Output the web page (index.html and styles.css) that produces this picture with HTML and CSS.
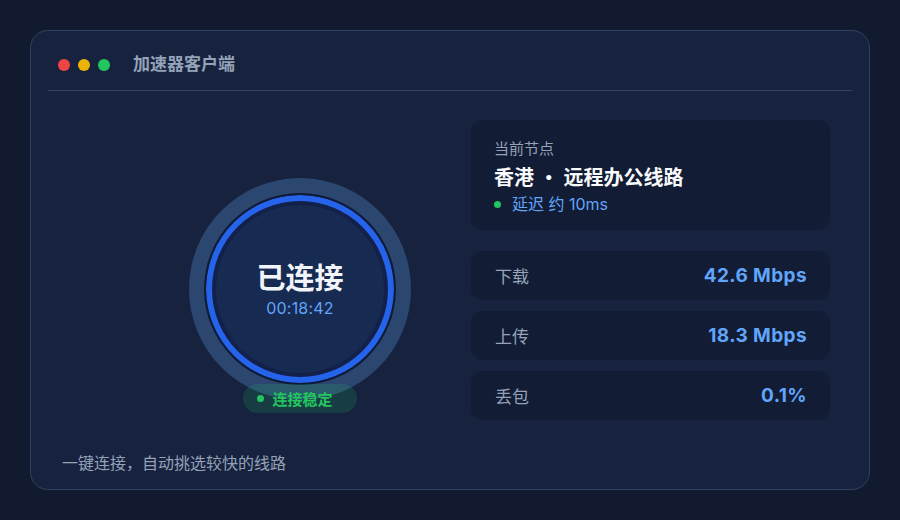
FILE: index.html
```html
<!DOCTYPE html>
<html lang="zh-CN">
<head>
<meta charset="utf-8">
<title>加速器客户端</title>
<link rel="stylesheet" href="styles.css">
</head>
<body>
  <div class="window">
    <header class="titlebar">
      <span class="dot dot-red"></span>
      <span class="dot dot-yellow"></span>
      <span class="dot dot-green"></span>
      <span class="app-title">加速器客户端</span>
    </header>

    <main class="content">
      <section class="connect">
        <div class="halo">
          <div class="ring">
            <div class="status">已连接</div>
            <div class="timer">00:18:42</div>
          </div>
        </div>
        <div class="badge"><span class="badge-dot"></span>连接稳定</div>
      </section>

      <section class="panel">
        <div class="node-card">
          <div class="node-label">当前节点</div>
          <div class="node-name">香港 <span class="sep">·</span> 远程办公线路</div>
          <div class="node-latency"><span class="latency-dot"></span>延迟 约 10ms</div>
        </div>
        <div class="stat"><span class="stat-label">下载</span><span class="stat-value">42.6 Mbps</span></div>
        <div class="stat"><span class="stat-label">上传</span><span class="stat-value">18.3 Mbps</span></div>
        <div class="stat"><span class="stat-label">丢包</span><span class="stat-value">0.1%</span></div>
      </section>
    </main>

    <footer class="hint">一键连接，自动挑选较快的线路</footer>
  </div>
</body>
</html>
```

FILE: styles.css
```css
* {
  box-sizing: border-box;
}

html, body {
  margin: 0;
  height: 100%;
}

body {
  background: #111a2e;
  padding: 30px;
  font-family: "Inter", "Noto Sans CJK SC", sans-serif;
  color: #e2e8f0;
}

.window {
  height: 460px;
  background: #17223f;
  border: 1px solid #334160;
  border-radius: 18px;
  display: flex;
  flex-direction: column;
}

/* title bar with the three window controls */
.titlebar {
  display: flex;
  align-items: center;
  margin: 0 17px;
  padding: 25px 10px 17px;
  border-bottom: 1px solid #344462;
}

.dot {
  width: 12px;
  height: 12px;
  border-radius: 50%;
  margin-right: 8px;
}

.dot-red { background: #ef4444; }
.dot-yellow { background: #eab308; }
.dot-green { background: #22c55e; margin-right: 23px; }

.app-title {
  font-size: 17px;
  line-height: 17px;
  font-weight: 700;
  color: #94a3b8;
}

.content {
  flex: 1;
  display: flex;
  padding: 29px 39px 0 0;
}

/* connect button */
.connect {
  flex: 1;
  display: flex;
  flex-direction: column;
  align-items: center;
  padding: 58px 0 0 118px;
  margin-right: 20px;
}

.halo {
  width: 222px;
  height: 222px;
  border-radius: 50%;
  background: #2b4770;
  display: flex;
  align-items: center;
  justify-content: center;
}

.ring {
  width: 192px;
  height: 192px;
  border-radius: 50%;
  background: #172a52;
  border: 2px solid #101b36;
  box-shadow: inset 0 0 0 6px #2563eb, inset 0 0 0 10px #12204a;
  display: flex;
  flex-direction: column;
  align-items: center;
  justify-content: center;
}

.status {
  font-size: 29px;
  line-height: 36px;
  font-weight: 700;
  color: #f1f5f9;
  margin-top: 2px;
}

.timer {
  font-size: 16px;
  line-height: 22px;
  letter-spacing: 0.2px;
  color: #60a5fa;
}

.badge {
  position: relative;
  margin-top: -16px;
  height: 29px;
  padding: 0 24px 0 14px;
  border-radius: 15px;
  background: rgba(34, 197, 94, 0.16);
  color: #22c55e;
  font-size: 15px;
  font-weight: 700;
  display: flex;
  align-items: center;
}

.badge-dot {
  width: 7px;
  height: 7px;
  border-radius: 50%;
  background: #22c55e;
  margin-right: 8px;
}

/* right column */
.panel {
  width: 359px;
  display: flex;
  flex-direction: column;
  gap: 11px;
}

.node-card {
  background: #121c34;
  border-radius: 12px;
  padding: 19px 23px 0;
  margin-bottom: 10px;
  height: 110px;
}

.node-label {
  font-size: 15px;
  line-height: 20px;
  color: #94a3b8;
}

.node-name {
  font-size: 20px;
  line-height: 28px;
  font-weight: 700;
  color: #f8fafc;
  margin-top: 5px;
}

.sep {
  display: inline-block;
  font-size: 30px;
  line-height: 20px;
  vertical-align: -3px;
  margin: 0 5px;
}

.node-latency {
  display: flex;
  align-items: center;
  font-size: 16px;
  line-height: 26px;
  color: #60a5fa;
  margin-top: -1px;
}

.latency-dot {
  width: 7px;
  height: 7px;
  border-radius: 50%;
  background: #22c55e;
  margin: 0 11px 0 0;
}

.stat {
  height: 49px;
  background: #121c34;
  border-radius: 12px;
  padding: 0 23px 0 24px;
  display: flex;
  align-items: center;
  justify-content: space-between;
}

.stat-label {
  font-size: 17px;
  color: #94a3b8;
}

.stat-value {
  font-size: 19px;
  letter-spacing: 0.4px;
  font-weight: 700;
  color: #60a5fa;
}

.hint {
  padding: 0 0 15px 31px;
  font-size: 16px;
  line-height: 22px;
  color: #94a3b8;
}
```
